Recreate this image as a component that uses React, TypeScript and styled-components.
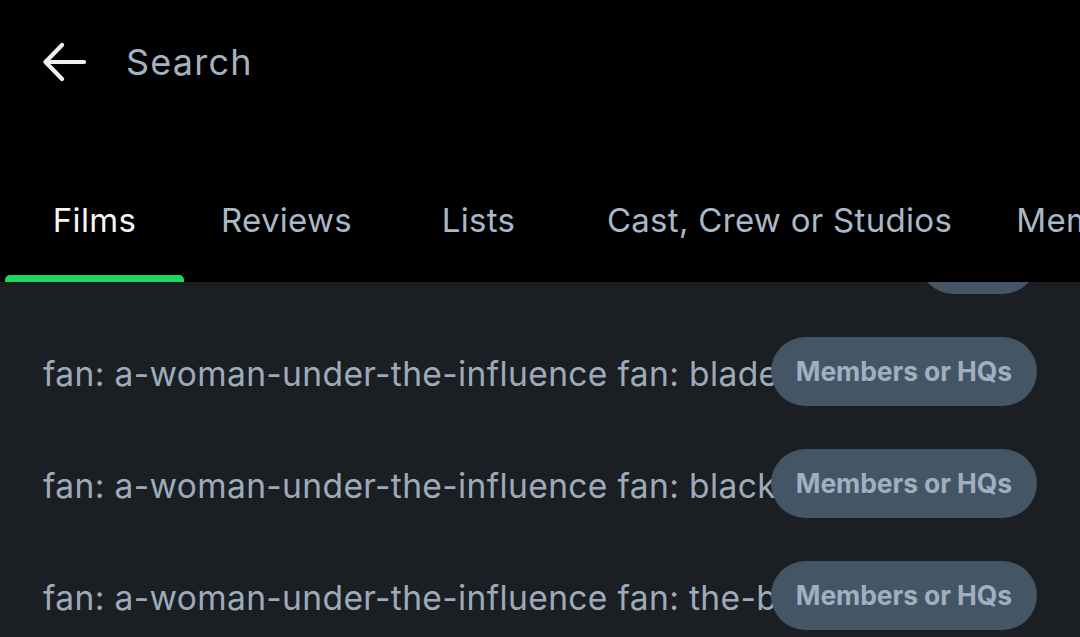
import React from 'react';
import styled, { createGlobalStyle } from 'styled-components';

const GlobalStyle = createGlobalStyle`
	html, body {
		margin: 0;
		padding: 0;
		background: #1b1e22;
	}
	body {
		font-family: Inter, 'Noto Sans', sans-serif;
		-webkit-font-smoothing: antialiased;
	}
`;

const Page = styled.div`
	width: 1080px;
	height: 637px;
	overflow: hidden;
	display: flex;
	flex-direction: column;
	background: #1b1e22;
`;

const Header = styled.header`
	background: #000;
	display: flex;
	flex-direction: column;
	flex-shrink: 0;
`;

const TopBar = styled.div`
	height: 126px;
	display: flex;
	align-items: center;
	padding-left: 40px;
	gap: 38px;
`;

const BackButton = styled.button`
	border: 0;
	background: none;
	padding: 0;
	width: 48px;
	height: 48px;
	display: flex;
	align-items: center;
	justify-content: center;
	color: #eef0f2;
	margin-top: -2px;
`;

const SearchField = styled.div`
	font-size: 36px;
	color: #a4b2c0;
	letter-spacing: 1.2px;
	margin-top: -2px;
`;

const Tabs = styled.nav`
	height: 156px;
	display: flex;
	align-items: stretch;
	padding-left: 5px;
	white-space: nowrap;
`;

const Tab = styled.div<{ $active?: boolean; $width: number }>`
	flex: 0 0 ${(p) => p.$width}px;
	display: flex;
	align-items: flex-end;
	justify-content: center;
	position: relative;
	font-size: 33px;
	letter-spacing: 0.3px;
	color: ${(p) => (p.$active ? '#f4f5f6' : '#aab8c6')};
	padding-bottom: 42px;
	box-sizing: border-box;

	&::after {
		content: '';
		display: ${(p) => (p.$active ? 'block' : 'none')};
		position: absolute;
		left: 0;
		right: 0;
		bottom: 0;
		height: 7px;
		background: #1ed760;
		border-radius: 5px 5px 0 0;
	}
`;

const Results = styled.div`
	flex: 1;
	overflow: hidden;
`;

const List = styled.div`
	margin-top: -79px;
	display: flex;
	flex-direction: column;
`;

const Row = styled.div`
	height: 112px;
	display: grid;
	grid-template-areas: 'cell';
	align-items: center;
	padding: 0 43px;
	overflow: hidden;
`;

const RowText = styled.div`
	grid-area: cell;
	font-size: 33.6px;
	color: #9cabba;
	white-space: nowrap;
	letter-spacing: 0.35px;
	margin-top: 4px;
`;

const Pill = styled.div`
	grid-area: cell;
	justify-self: end;
	height: 69px;
	padding: 0 25px;
	border-radius: 35px;
	background: #445566;
	color: #9fb0c2;
	font-size: 26.5px;
	font-weight: 700;
	display: flex;
	align-items: center;
	letter-spacing: -0.1px;
`;

const tabs = [
	{ label: 'Films', width: 179, active: true },
	{ label: 'Reviews', width: 205 },
	{ label: 'Lists', width: 179 },
	{ label: 'Cast, Crew or Studios', width: 423 },
	{ label: 'Members', width: 200 },
];

const rows = [
	{ text: 'fan: a-woman-under-the-influence fan: apocalypse-now', tag: 'Films' },
	{ text: 'fan: a-woman-under-the-influence fan: blade-runner', tag: 'Members or HQs' },
	{ text: 'fan: a-woman-under-the-influence fan: black-swan', tag: 'Members or HQs' },
	{ text: 'fan: a-woman-under-the-influence fan: the-birds', tag: 'Members or HQs' },
];

const App: React.FC = () => (
	<Page>
		<GlobalStyle />
		<Header>
			<TopBar>
				<BackButton aria-label="Back">
					<svg width="44" height="40" viewBox="0 0 44 40" fill="none">
						<path
							d="M42 20H4M20 3L3.5 20L20 37"
							stroke="currentColor"
							strokeWidth="4.2"
							strokeLinecap="round"
							strokeLinejoin="round"
						/>
					</svg>
				</BackButton>
				<SearchField>Search</SearchField>
			</TopBar>
			<Tabs>
				{tabs.map((tab) => (
					<Tab key={tab.label} $active={tab.active} $width={tab.width}>
						{tab.label}
					</Tab>
				))}
			</Tabs>
		</Header>
		<Results>
			<List>
				{rows.map((row) => (
					<Row key={row.text}>
						<RowText>{row.text}</RowText>
						<Pill>{row.tag}</Pill>
					</Row>
				))}
			</List>
		</Results>
	</Page>
);

export default App;
